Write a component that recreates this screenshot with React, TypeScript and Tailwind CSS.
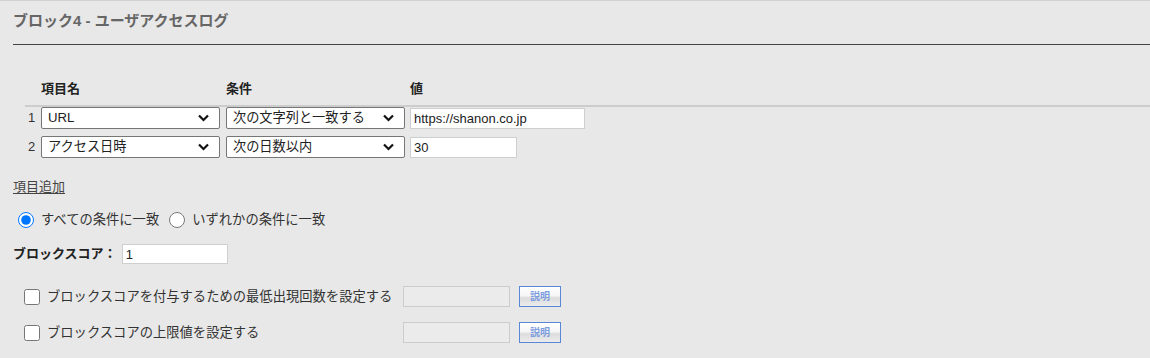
import React from "react";

const font = "font-['Liberation_Sans','Noto_Sans_CJK_JP',sans-serif]";

function Chevron() {
  return (
    <svg
      className="pointer-events-none absolute right-[10px] top-1/2 -translate-y-1/2"
      width="11"
      height="8"
      viewBox="0 0 11 8"
      fill="none"
    >
      <path d="M1 1.5 L5.5 6 L10 1.5" stroke="#111" strokeWidth="2.2" />
    </svg>
  );
}

function FakeSelect({ value }: { value: string }) {
  return (
    <div className="relative w-[179px] h-[22px] bg-white border border-[#767676] rounded-[2px] flex items-center pl-[6px] text-[13.2px] text-[#222]">
      <span>{value}</span>
      <Chevron />
    </div>
  );
}

function SetupRow({ label }: { label: string }) {
  return (
    <div className="flex items-center h-[21px]">
      <div className="w-[390px] flex items-center">
        <input type="checkbox" readOnly className="ml-[11px] w-4 h-4 accent-[#0075ff]" />
        <span className="ml-[7px] text-[13.3px] text-[#333]">{label}</span>
      </div>
      <div className="w-[107px] h-[21px] bg-[#ebebeb] border border-[#cccccc]" />
      <button className="ml-[9px] w-[42px] h-[21px] border border-[#5a86d8] bg-[linear-gradient(#ffffff_0%,#f6f6f6_45%,#dcdcdc_58%,#ececec_100%)] text-[10px] leading-none font-bold text-[#7d9de0]">
        説明
      </button>
    </div>
  );
}

export default function App() {
  const rows = [
    { no: 1, item: "URL", cond: "次の文字列と一致する", value: "https://shanon.co.jp", w: "w-[175px]" },
    { no: 2, item: "アクセス日時", cond: "次の日数以内", value: "30", w: "w-[107px]" },
  ];

  return (
    <div className={`min-h-screen bg-[#e8e8e8] border-t border-[#d2d2d2] ${font}`}>
      <div className="pl-[13px]">
        {/* Title */}
        <h2 className="pt-[10px] pb-[13px] leading-[20px] border-b border-[#444] text-[15px] font-bold text-[#666]">
          ブロック4 - ユーザアクセスログ
        </h2>

        {/* Conditions table */}
        <div className="ml-[12px]">
          <div className="mt-[32px] h-[30px] pb-[4px] border-b-2 border-[#cccccc] flex items-center text-[13px] font-bold text-[#222]">
            <div className="w-[16px]" />
            <div className="w-[185px]">項目名</div>
            <div className="w-[184px]">条件</div>
            <div>値</div>
          </div>
          <div className="flex flex-col gap-[7px]">
            {rows.map((r) => (
              <div key={r.no} className="flex items-center h-[22px]">
                <div className="w-[16px] pl-[3px] text-[13px] text-[#333]">{r.no}</div>
                <FakeSelect value={r.item} />
                <div className="ml-[6px]">
                  <FakeSelect value={r.cond} />
                </div>
                <input
                  readOnly
                  value={r.value}
                  className={`ml-[5px] ${r.w} h-[21px] bg-white border border-[#cfcfcf] pl-[3px] text-[13px] text-[#222] outline-none`}
                />
              </div>
            ))}
          </div>
        </div>

        {/* Add item */}
        <div className="mt-[21px] text-[13px] leading-[16px] text-[#444]">
          <span className="underline underline-offset-2">項目追加</span>
        </div>

        {/* Match mode */}
        <div className="mt-[15px] h-[20px] flex items-center text-[13.3px] text-[#333]">
          <input type="radio" name="m" defaultChecked className="ml-[5px] w-4 h-4 accent-[#0075ff]" />
          <span className="ml-[7px]">すべての条件に一致</span>
          <input type="radio" name="m" className="ml-[10px] w-4 h-4" />
          <span className="ml-[7px]">いずれかの条件に一致</span>
        </div>

        {/* Block score */}
        <div className="mt-[14px] h-[20px] flex items-center">
          <span className="text-[13px] font-bold text-[#222]">ブロックスコア：</span>
          <input
            readOnly
            value="1"
            className="ml-[5px] w-[106px] h-[20px] bg-white border border-[#cfcfcf] pl-[3px] text-[13px] text-[#222] outline-none"
          />
        </div>

        {/* Options */}
        <div className="mt-[22px] flex flex-col gap-[15px]">
          <SetupRow label="ブロックスコアを付与するための最低出現回数を設定する" />
          <SetupRow label="ブロックスコアの上限値を設定する" />
        </div>
      </div>
    </div>
  );
}
